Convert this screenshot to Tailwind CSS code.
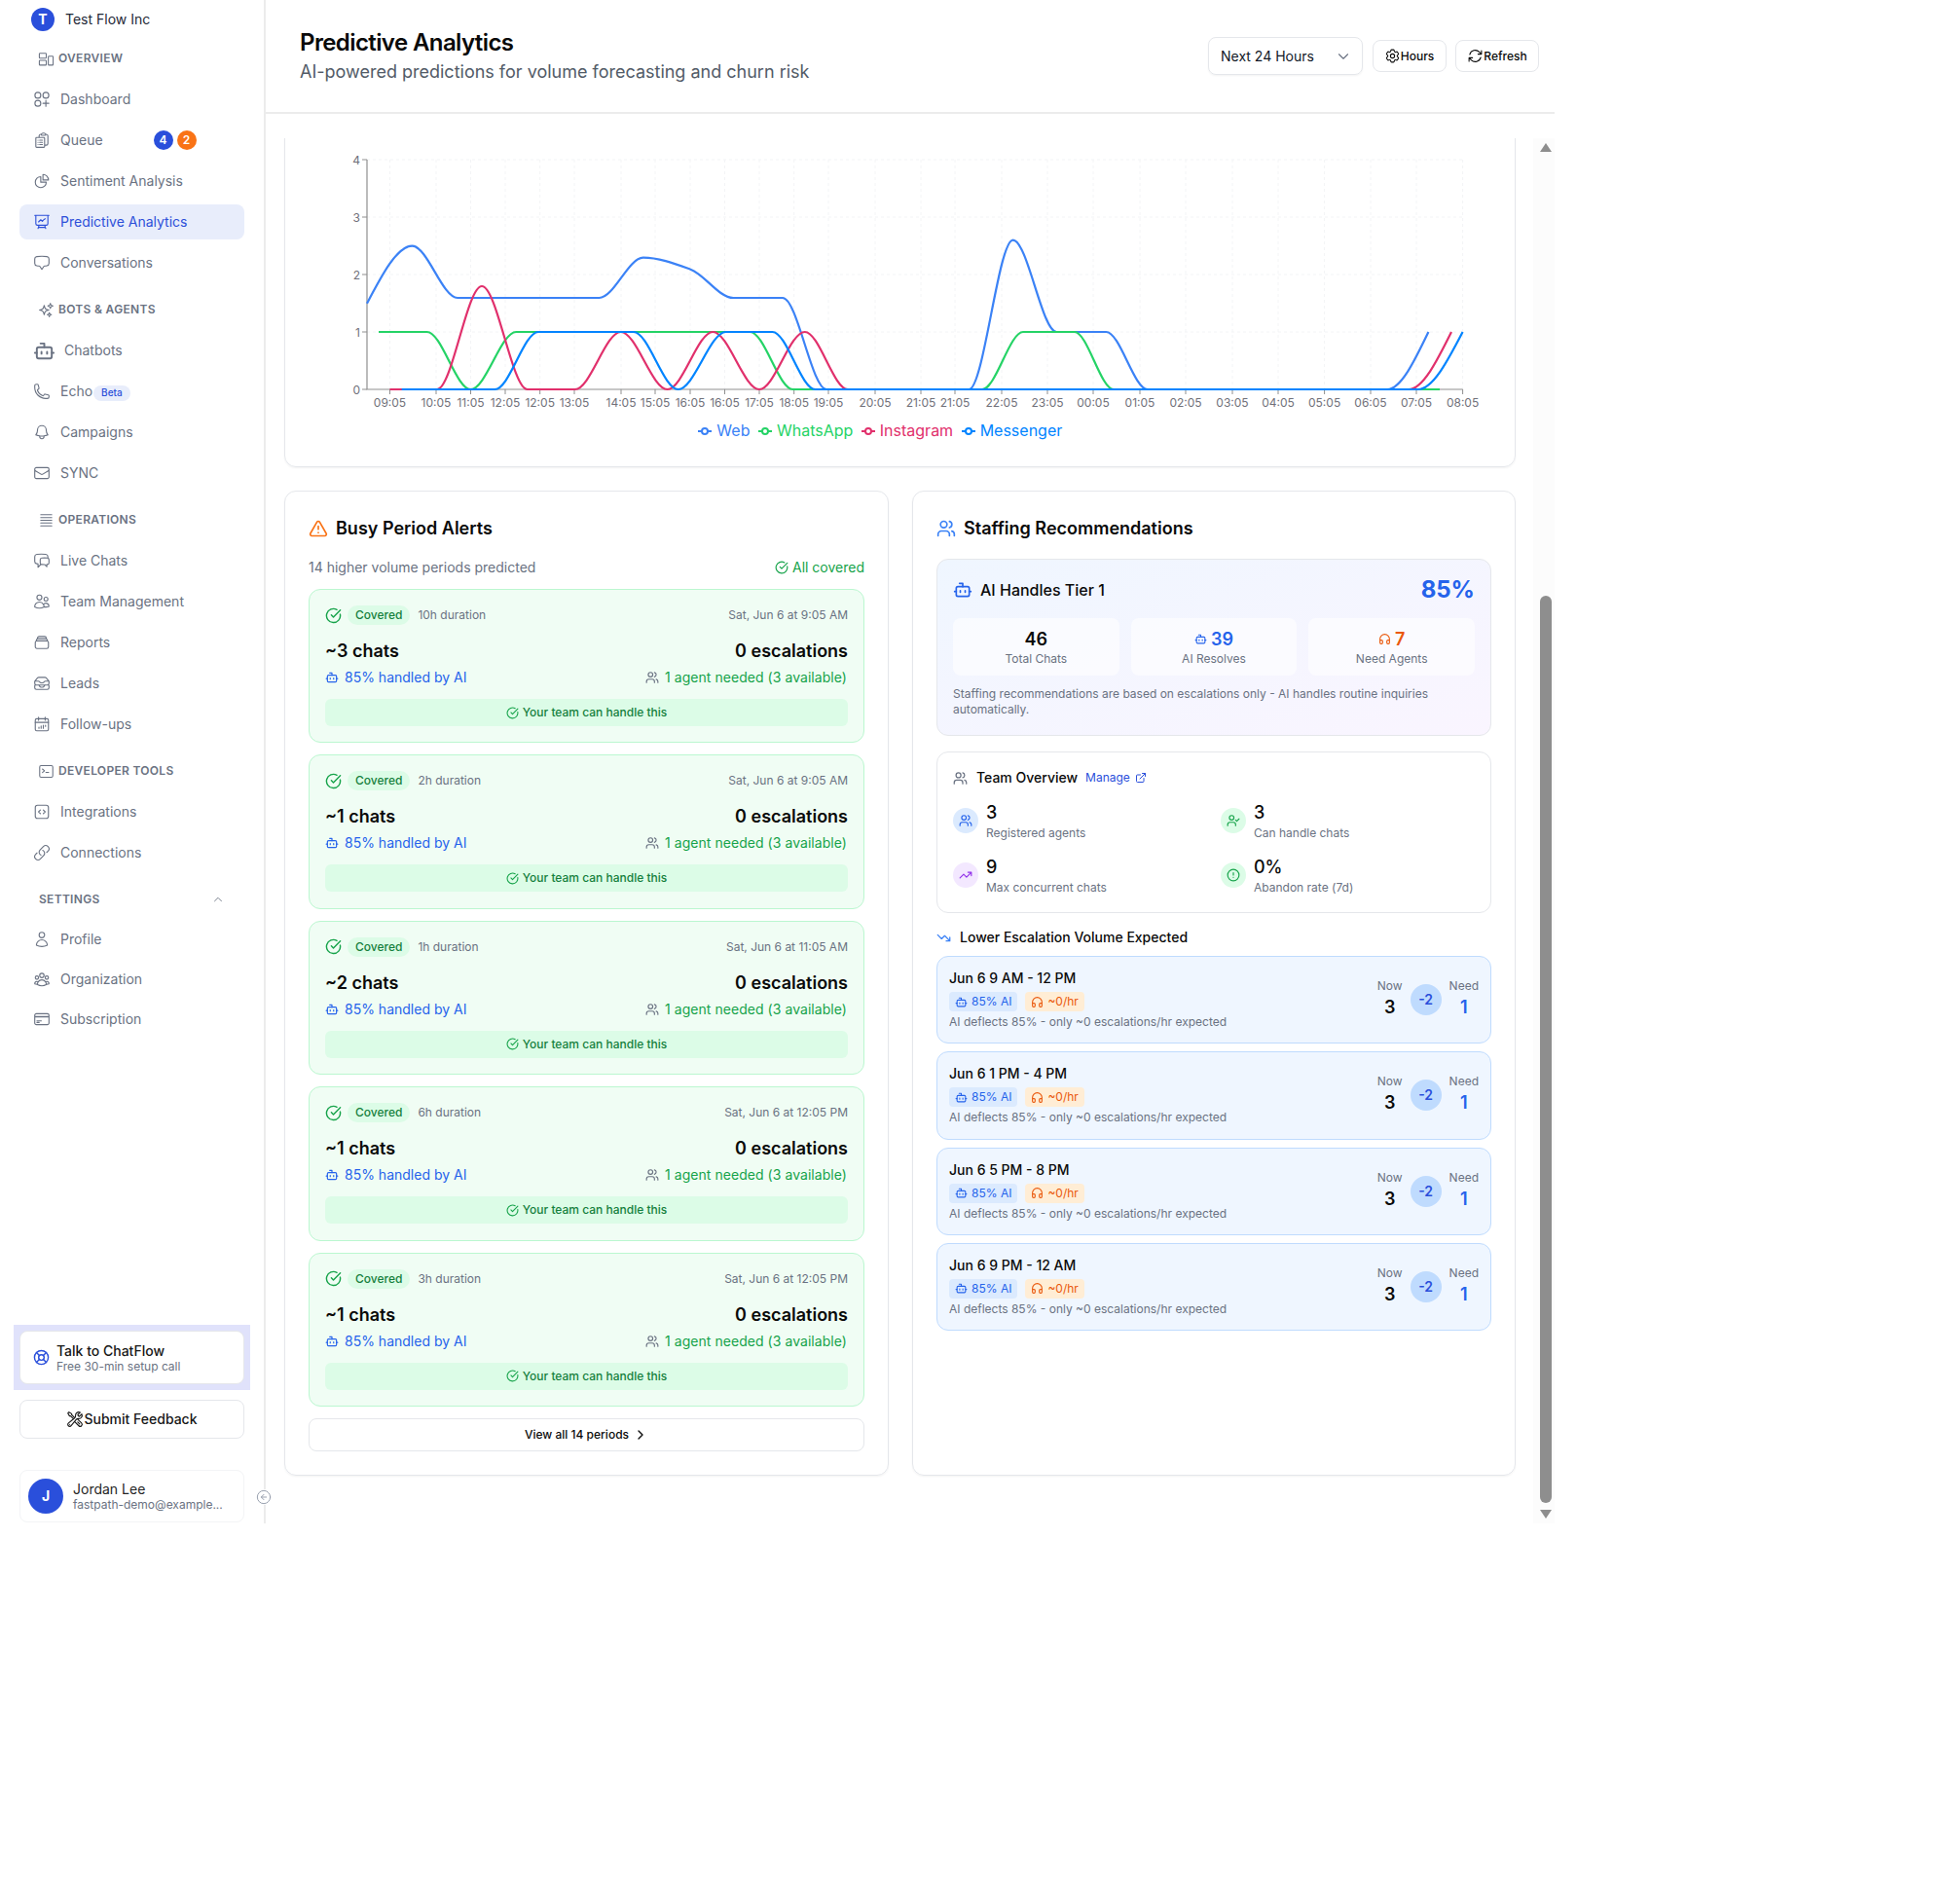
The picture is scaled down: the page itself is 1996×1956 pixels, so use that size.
<!DOCTYPE html>
<html>
  <head>
    <meta charset="UTF-8" />
    <title>Predictive Analytics</title>
    <script src="https://cdn.jsdelivr.net/npm/@tailwindcss/browser@4"></script>
  </head>
  <body class="bg-white font-['Inter',sans-serif] text-[#0a0a0a]">
    <!-- icon sprite -->
    <svg class="hidden">
      <symbol id="overview" viewBox="0 0 24 24"><rect x="2" y="4" width="10" height="7" rx="1"/><rect x="2" y="14" width="10" height="7" rx="1"/><rect x="15" y="8" width="7" height="13" rx="1"/></symbol>
      <symbol id="dash" viewBox="0 0 24 24"><circle cx="6.5" cy="6.5" r="4"/><circle cx="17.5" cy="6.5" r="4"/><circle cx="6.5" cy="17.5" r="4"/><path d="M17.5 13.5v8M13.5 17.5h8"/></symbol>
      <symbol id="queue" viewBox="0 0 24 24"><path d="M9 12h3.75M9 15h3.75M9 18h3.75m3 .75H18a2.25 2.25 0 0 0 2.25-2.25V6.108c0-1.135-.845-2.098-1.976-2.192a48.424 48.424 0 0 0-1.123-.08m-5.801 0c-.065.21-.1.433-.1.664 0 .414.336.75.75.75h4.5a.75.75 0 0 0 .75-.75 2.25 2.25 0 0 0-.1-.664m-5.8 0A2.251 2.251 0 0 1 13.5 2.25H15c1.012 0 1.867.668 2.15 1.586m-5.8 0c-.376.023-.75.05-1.124.08C9.095 4.01 8.25 4.973 8.25 6.108V8.25m0 0H4.875c-.621 0-1.125.504-1.125 1.125v11.25c0 .621.504 1.125 1.125 1.125h9.75c.621 0 1.125-.504 1.125-1.125V9.375c0-.621-.504-1.125-1.125-1.125H8.25ZM6.75 12h.008v.008H6.75V12Zm0 3h.008v.008H6.75V15Zm0 3h.008v.008H6.75V18Z"/></symbol>
      <symbol id="pie" viewBox="0 0 24 24"><path d="M10.5 6a7.5 7.5 0 1 0 7.5 7.5h-7.5V6Z"/><path d="M13.5 10.5H21A7.5 7.5 0 0 0 13.5 3v7.5Z"/></symbol>
      <symbol id="present" viewBox="0 0 24 24"><path d="M3.75 3v11.25A2.25 2.25 0 0 0 6 16.5h2.25M3.75 3h-1.5m1.5 0h16.5m0 0h1.5m-1.5 0v11.25A2.25 2.25 0 0 1 18 16.5h-2.25m-7.5 0h7.5m-7.5 0-1 3m8.5-3 1 3m0 0 .5 1.5m-.5-1.5h-9.5m0 0-.5 1.5m.75-9 3-3 2.148 2.148A12.061 12.061 0 0 1 16.5 7.605"/></symbol>
      <symbol id="bubble" viewBox="0 0 24 24"><path d="M2.25 12.76c0 1.6 1.123 2.994 2.707 3.227 1.068.157 2.148.279 3.238.364.466.037.893.281 1.153.671L12 21l2.652-3.978c.26-.39.687-.634 1.153-.67 1.09-.086 2.17-.208 3.238-.365 1.584-.233 2.707-1.626 2.707-3.228V6.741c0-1.602-1.123-2.995-2.707-3.228A48.394 48.394 0 0 0 12 3c-2.392 0-4.744.175-7.043.513C3.373 3.746 2.25 5.14 2.25 6.741v6.018Z"/></symbol>
      <symbol id="sparkles" viewBox="0 0 24 24"><path d="M9.813 15.904 9 18.75l-.813-2.846a4.5 4.5 0 0 0-3.09-3.09L2.25 12l2.846-.813a4.5 4.5 0 0 0 3.09-3.09L9 5.25l.813 2.846a4.5 4.5 0 0 0 3.09 3.09L15.75 12l-2.846.813a4.5 4.5 0 0 0-3.09 3.09ZM18.259 8.715 18 9.75l-.259-1.035a3.375 3.375 0 0 0-2.455-2.456L14.25 6l1.036-.259a3.375 3.375 0 0 0 2.455-2.456L18 2.25l.259 1.035a3.375 3.375 0 0 0 2.456 2.456L21.75 6l-1.035.259a3.375 3.375 0 0 0-2.456 2.456ZM16.894 20.567 16.5 21.75l-.394-1.183a2.25 2.25 0 0 0-1.423-1.423L13.5 18.75l1.183-.394a2.25 2.25 0 0 0 1.423-1.423l.394-1.183.394 1.183a2.25 2.25 0 0 0 1.423 1.423l1.183.394-1.183.394a2.25 2.25 0 0 0-1.423 1.423Z"/></symbol>
      <symbol id="bot" viewBox="0 0 24 24"><path d="M12 8V4H8"/><rect x="4" y="8" width="16" height="12" rx="2"/><path d="M2 14h2M20 14h2M15 13v2M9 13v2"/></symbol>
      <symbol id="phone" viewBox="0 0 24 24"><path d="M2.25 6.75c0 8.284 6.716 15 15 15h2.25a2.25 2.25 0 0 0 2.25-2.25v-1.372c0-.516-.351-.966-.852-1.091l-4.423-1.106c-.44-.11-.902.055-1.173.417l-.97 1.293c-.282.376-.769.542-1.21.38a12.035 12.035 0 0 1-7.143-7.143c-.162-.441.004-.928.38-1.21l1.293-.97c.363-.271.527-.734.417-1.173L6.963 3.102a1.125 1.125 0 0 0-1.091-.852H4.5A2.25 2.25 0 0 0 2.25 4.5v2.25Z"/></symbol>
      <symbol id="bell" viewBox="0 0 24 24"><path d="M14.857 17.082a23.848 23.848 0 0 0 5.454-1.31A8.967 8.967 0 0 1 18 9.75V9A6 6 0 0 0 6 9v.75a8.967 8.967 0 0 1-2.312 6.022c1.733.64 3.56 1.085 5.455 1.31m5.714 0a24.255 24.255 0 0 1-5.714 0m5.714 0a3 3 0 1 1-5.714 0"/></symbol>
      <symbol id="mail" viewBox="0 0 24 24"><path d="M21.75 6.75v10.5a2.25 2.25 0 0 1-2.25 2.25h-15a2.25 2.25 0 0 1-2.25-2.25V6.75m19.5 0A2.25 2.25 0 0 0 19.5 4.5h-15a2.25 2.25 0 0 0-2.25 2.25m19.5 0v.243a2.25 2.25 0 0 1-1.07 1.916l-7.5 4.615a2.25 2.25 0 0 1-2.36 0L3.32 8.91a2.25 2.25 0 0 1-1.07-1.916V6.75"/></symbol>
      <symbol id="lines" viewBox="0 0 24 24"><path d="M4 4h16M4 8h16M4 12h16M4 16h16M4 20h16"/></symbol>
      <symbol id="chats" viewBox="0 0 24 24"><path d="M20.25 8.511c.884.284 1.5 1.128 1.5 2.097v4.286c0 1.136-.847 2.1-1.98 2.193-.34.027-.68.052-1.02.072v3.091l-3-3c-1.354 0-2.694-.055-4.02-.163a2.115 2.115 0 0 1-.825-.242m9.345-8.334a2.126 2.126 0 0 0-.476-.095 48.64 48.64 0 0 0-8.048 0c-1.131.094-1.976 1.057-1.976 2.192v4.286c0 .837.46 1.58 1.155 1.951m9.345-8.334V6.637c0-1.621-1.152-3.026-2.76-3.235A48.455 48.455 0 0 0 11.25 3c-2.115 0-4.198.137-6.24.402-1.608.209-2.76 1.614-2.76 3.235v6.226c0 1.621 1.152 3.026 2.76 3.235.577.075 1.157.14 1.74.194V21l4.155-4.155"/></symbol>
      <symbol id="team" viewBox="0 0 24 24"><path d="M15 19.128a9.38 9.38 0 0 0 2.625.372 9.337 9.337 0 0 0 4.121-.952 4.125 4.125 0 0 0-7.533-2.493M15 19.128v-.003c0-1.113-.285-2.16-.786-3.07M15 19.128v.106A12.318 12.318 0 0 1 8.624 21c-2.331 0-4.512-.645-6.374-1.766l-.001-.109a6.375 6.375 0 0 1 11.964-3.07M12 6.375a3.375 3.375 0 1 1-6.75 0 3.375 3.375 0 0 1 6.75 0Zm8.25 2.25a2.625 2.625 0 1 1-5.25 0 2.625 2.625 0 0 1 5.25 0Z"/></symbol>
      <symbol id="stack" viewBox="0 0 24 24"><path d="M6 6.878V6a2.25 2.25 0 0 1 2.25-2.25h7.5A2.25 2.25 0 0 1 18 6v.878m-12 0c.235-.083.487-.128.75-.128h10.5c.263 0 .515.045.75.128m-12 0A2.25 2.25 0 0 0 4.5 9v.878m13.5-3A2.25 2.25 0 0 1 19.5 9v.878m0 0a2.246 2.246 0 0 0-.75-.128H5.25c-.263 0-.515.045-.75.128m15 0A2.25 2.25 0 0 1 21 12v6a2.25 2.25 0 0 1-2.25 2.25H5.25A2.25 2.25 0 0 1 3 18v-6c0-.98.626-1.813 1.5-2.122"/></symbol>
      <symbol id="inbox" viewBox="0 0 24 24"><path d="M7.875 14.25l1.214 1.942a2.25 2.25 0 0 0 1.908 1.058h2.006c.776 0 1.497-.4 1.908-1.058l1.214-1.942M2.41 9h4.636a2.25 2.25 0 0 1 1.872 1.002l.164.246a2.25 2.25 0 0 0 1.872 1.002h2.092a2.25 2.25 0 0 0 1.872-1.002l.164-.246A2.25 2.25 0 0 1 16.954 9h4.636M2.41 9a2.25 2.25 0 0 0-.16.832V12a2.25 2.25 0 0 0 2.25 2.25h15A2.25 2.25 0 0 0 21.75 12V9.832c0-.287-.055-.57-.16-.832M2.41 9a2.25 2.25 0 0 1 .382-.632l3.285-3.832a2.25 2.25 0 0 1 1.708-.786h8.43c.657 0 1.281.287 1.709.786l3.284 3.832c.163.19.291.404.382.632M4.5 20.25h15A2.25 2.25 0 0 0 21.75 18v-2.625c0-.621-.504-1.125-1.125-1.125H3.375c-.621 0-1.125.504-1.125 1.125V18a2.25 2.25 0 0 0 2.25 2.25Z"/></symbol>
      <symbol id="calendar" viewBox="0 0 24 24"><rect x="3" y="4.5" width="18" height="16.5" rx="2"/><path d="M3 9.5h18M7.5 2.5v4M16.5 2.5v4M8 17.5V16M11 17.5v-3M14 17.5v-4M17 15v-1.5"/></symbol>
      <symbol id="terminal" viewBox="0 0 24 24"><rect x="2.5" y="3.5" width="19" height="17" rx="2"/><path d="M6.5 8.5l3 2.5-3 2.5M11.5 13.5h4"/></symbol>
      <symbol id="code" viewBox="0 0 24 24"><rect x="3" y="3" width="18" height="18" rx="3"/><path d="M10 9.5 7.5 12l2.5 2.5M14 9.5l2.5 2.5-2.5 2.5"/></symbol>
      <symbol id="link" viewBox="0 0 24 24"><path d="M13.19 8.688a4.5 4.5 0 0 1 1.242 7.244l-4.5 4.5a4.5 4.5 0 0 1-6.364-6.364l1.757-1.757m13.35-.622 1.757-1.757a4.5 4.5 0 0 0-6.364-6.364l-4.5 4.5a4.5 4.5 0 0 0 1.242 7.244"/></symbol>
      <symbol id="user" viewBox="0 0 24 24"><path d="M15.75 6a3.75 3.75 0 1 1-7.5 0 3.75 3.75 0 0 1 7.5 0ZM4.501 20.118a7.5 7.5 0 0 1 14.998 0A17.933 17.933 0 0 1 12 21.75c-2.676 0-5.216-.584-7.499-1.632Z"/></symbol>
      <symbol id="group" viewBox="0 0 24 24"><path d="M18 18.72a9.094 9.094 0 0 0 3.741-.479 3 3 0 0 0-4.682-2.72m.94 3.198.001.031c0 .225-.012.447-.037.666A11.944 11.944 0 0 1 12 21c-2.17 0-4.207-.576-5.963-1.584A6.062 6.062 0 0 1 6 18.719m12 0a5.971 5.971 0 0 0-.941-3.197m0 0A5.995 5.995 0 0 0 12 12.75a5.995 5.995 0 0 0-5.058 2.772m0 0a3 3 0 0 0-4.681 2.72 8.986 8.986 0 0 0 3.74.477m.94-3.197a5.971 5.971 0 0 0-.94 3.197M15 6.75a3 3 0 1 1-6 0 3 3 0 0 1 6 0Zm6 3a2.25 2.25 0 1 1-4.5 0 2.25 2.25 0 0 1 4.5 0Zm-13.5 0a2.25 2.25 0 1 1-4.5 0 2.25 2.25 0 0 1 4.5 0Z"/></symbol>
      <symbol id="card" viewBox="0 0 24 24"><path d="M2.25 8.25h19.5M2.25 9h19.5m-16.5 5.25h6m-6 2.25h3m-3.75 3h15a2.25 2.25 0 0 0 2.25-2.25V6.75A2.25 2.25 0 0 0 19.5 4.5h-15a2.25 2.25 0 0 0-2.25 2.25v10.5A2.25 2.25 0 0 0 4.5 19.5Z"/></symbol>
      <symbol id="buoy" viewBox="0 0 24 24"><circle cx="12" cy="12" r="10"/><circle cx="12" cy="12" r="4"/><path d="m4.93 4.93 4.24 4.24M14.83 9.17l4.24-4.24M14.83 14.83l4.24 4.24M9.17 14.83l-4.24 4.24"/></symbol>
      <symbol id="tools" viewBox="0 0 24 24"><path d="M11.42 15.17 17.25 21A2.652 2.652 0 0 0 21 17.25l-5.877-5.877M11.42 15.17l2.496-3.03c.317-.384.74-.626 1.208-.766M11.42 15.17l-4.655 5.653a2.548 2.548 0 1 1-3.586-3.586l6.837-5.63m5.108-.233c.55-.164 1.163-.188 1.743-.14a4.5 4.5 0 0 0 4.486-6.336l-3.276 3.277a3.004 3.004 0 0 1-2.25-2.25l3.276-3.276a4.5 4.5 0 0 0-6.336 4.486c.091 1.076-.071 2.264-.904 2.95l-.102.085m-1.745 1.437L5.909 7.5H4.5L2.25 3.75l1.5-1.5L7.5 4.5v1.409l4.26 4.26m-1.745 1.437 1.745-1.437m6.615 8.206L15.75 15.75M4.867 19.125h.008v.008h-.008v-.008Z"/></symbol>
      <symbol id="gear" viewBox="0 0 24 24"><path d="M9.594 3.94c.09-.542.56-.94 1.11-.94h2.593c.55 0 1.02.398 1.11.94l.213 1.281c.063.374.313.686.645.87.074.04.147.083.22.127.325.196.72.257 1.075.124l1.217-.456a1.125 1.125 0 0 1 1.37.49l1.296 2.247a1.125 1.125 0 0 1-.26 1.431l-1.003.827c-.293.241-.438.613-.43.992a7.723 7.723 0 0 1 0 .255c-.008.378.137.75.43.991l1.004.827c.424.35.534.955.26 1.43l-1.298 2.247a1.125 1.125 0 0 1-1.369.491l-1.217-.456c-.355-.133-.75-.072-1.076.124a6.47 6.47 0 0 1-.22.128c-.331.183-.581.495-.644.869l-.213 1.281c-.09.543-.56.94-1.11.94h-2.594c-.55 0-1.019-.398-1.11-.94l-.213-1.281c-.062-.374-.312-.686-.644-.87a6.52 6.52 0 0 1-.22-.127c-.325-.196-.72-.257-1.076-.124l-1.217.456a1.125 1.125 0 0 1-1.369-.49l-1.297-2.247a1.125 1.125 0 0 1 .26-1.431l1.004-.827c.292-.24.437-.613.43-.991a6.932 6.932 0 0 1 0-.255c.007-.38-.138-.751-.43-.992l-1.004-.827a1.125 1.125 0 0 1-.26-1.43l1.297-2.247a1.125 1.125 0 0 1 1.37-.491l1.216.456c.356.133.751.072 1.076-.124.072-.044.146-.086.22-.128.332-.183.582-.495.644-.869l.214-1.28Z"/><path d="M15 12a3 3 0 1 1-6 0 3 3 0 0 1 6 0Z"/></symbol>
      <symbol id="refresh" viewBox="0 0 24 24"><path d="M16.023 9.348h4.992v-.001M2.985 19.644v-4.992m0 0h4.992m-4.993 0 3.181 3.183a8.25 8.25 0 0 0 13.803-3.7M4.031 9.865a8.25 8.25 0 0 1 13.803-3.7l3.181 3.182m0-4.991v4.99"/></symbol>
      <symbol id="warn" viewBox="0 0 24 24"><path d="m21.73 18-8-14a2 2 0 0 0-3.48 0l-8 14A2 2 0 0 0 4 21h16a2 2 0 0 0 1.73-3"/><path d="M12 9v4M12 17h.01"/></symbol>
      <symbol id="check" viewBox="0 0 24 24"><path d="M21.801 10A10 10 0 1 1 17 3.335"/><path d="m9 11 3 3L22 4"/></symbol>
      <symbol id="users" viewBox="0 0 24 24"><path d="M16 21v-2a4 4 0 0 0-4-4H6a4 4 0 0 0-4 4v2"/><circle cx="9" cy="7" r="4"/><path d="M22 21v-2a4 4 0 0 0-3-3.87M16 3.13a4 4 0 0 1 0 7.75"/></symbol>
      <symbol id="usercheck" viewBox="0 0 24 24"><path d="M16 21v-2a4 4 0 0 0-4-4H6a4 4 0 0 0-4 4v2"/><circle cx="9" cy="7" r="4"/><path d="m16 11 2 2 4-4"/></symbol>
      <symbol id="headset" viewBox="0 0 24 24"><path d="M3 14h3a2 2 0 0 1 2 2v3a2 2 0 0 1-2 2H5a2 2 0 0 1-2-2v-7a9 9 0 0 1 18 0v7a2 2 0 0 1-2 2h-1a2 2 0 0 1-2-2v-3a2 2 0 0 1 2-2h3"/></symbol>
      <symbol id="external" viewBox="0 0 24 24"><path d="M15 3h6v6M10 14 21 3M18 13v6a2 2 0 0 1-2 2H5a2 2 0 0 1-2-2V8a2 2 0 0 1 2-2h6"/></symbol>
      <symbol id="down" viewBox="0 0 24 24"><path d="M22 17 13.5 8.5l-5 5L2 7M16 17h6v-6"/></symbol>
      <symbol id="up" viewBox="0 0 24 24"><path d="M22 7l-8.5 8.5-5-5L2 17M16 7h6v6"/></symbol>
      <symbol id="alert" viewBox="0 0 24 24"><circle cx="12" cy="12" r="10"/><path d="M12 8v4M12 16h.01"/></symbol>
      <symbol id="chevdown" viewBox="0 0 24 24"><path d="m6 9 6 6 6-6"/></symbol>
      <symbol id="chevup" viewBox="0 0 24 24"><path d="m18 15-6-6-6 6"/></symbol>
      <symbol id="chevright" viewBox="0 0 24 24"><path d="m9 18 6-6-6-6"/></symbol>
      <symbol id="back" viewBox="0 0 24 24"><circle cx="12" cy="12" r="10"/><path d="M16 12H8M12 8l-4 4 4 4"/></symbol>
    </svg>

    <div class="flex w-[1597px] h-[1565px] relative">
      <aside class="w-[273px] shrink-0 h-full border-r-2 border-[#ececec] flex flex-col pl-5 pr-[20px]">
        <div class="h-[39px] flex items-center gap-[11px] pl-3 text-sm text-[#1f2937]">
          <span class="w-6 h-6 rounded-full bg-[#2a4fdb] text-white font-bold text-sm flex items-center justify-center">T</span>
          Test Flow Inc
        </div>
        <nav id="nav" class="mt-[-3px]"></nav>

        <div class="mt-auto">
          <div class="ml-[-6px] mr-[-6px] p-[6px] bg-[#e0e2fb]">
            <div class="h-[55px] bg-white rounded-lg border border-gray-200 flex items-center gap-[7px] pl-[13px]">
              <i data-icon="buoy" class="w-[17px] h-[17px] text-[#2a4fdb]"></i>
              <div>
                <div class="text-sm font-medium leading-[17px] text-[#171717]">Talk to ChatFlow</div>
                <div class="text-xs leading-[15px] text-gray-500">Free 30-min setup call</div>
              </div>
            </div>
          </div>
          <div class="mt-[10px] h-10 rounded-lg border border-gray-200 flex items-center justify-center text-sm font-medium text-[#171717]">
            <i data-icon="tools" class="w-[18px] h-[18px]"></i>Submit Feedback
          </div>
          <div class="mt-8 h-[54px] mb-[1px] rounded-lg border border-gray-100 flex items-center gap-[10px] pl-2">
            <span class="w-9 h-9 rounded-full bg-[#2a4fdb] text-white font-bold text-sm flex items-center justify-center">J</span>
            <div>
              <div class="text-sm leading-[17px] text-[#262626]">Jordan Lee</div>
              <div class="text-xs leading-[16px] text-gray-500">fastpath-demo@example...</div>
            </div>
          </div>
        </div>
      </aside>
      <span class="absolute left-[263px] top-[1530px] w-4 h-4 bg-white rounded-full">
        <i data-icon="back" class="w-4 h-4 text-gray-400"></i>
      </span>

      <main class="flex-1 min-w-0 h-full flex flex-col">
        <header class="h-[117px] shrink-0 border-b-2 border-[#ececec] flex items-center justify-between pl-[35px] pr-4">
          <div>
            <h1 class="text-2xl font-semibold leading-8 tracking-[-0.6px]">Predictive Analytics</h1>
            <p class="text-lg leading-7 text-[#525b67]">AI-powered predictions for volume forecasting and churn risk</p>
          </div>
          <div class="flex items-center gap-[9.5px]">
            <div class="w-[159px] h-[39px] rounded-lg border border-gray-200 shadow-xs flex items-center justify-between pl-3 pr-[10px] text-sm text-[#111827]">
              Next 24 Hours
              <i data-icon="chevdown" class="w-[18px] h-[18px] text-gray-500"></i>
            </div>
            <div class="h-[33px] w-[76px] rounded-lg border border-gray-200 flex items-center justify-center text-xs font-medium">
              <i data-icon="gear" class="w-[17px] h-[17px]"></i>Hours
            </div>
            <div class="h-[33px] w-[86px] rounded-lg border border-gray-200 flex items-center justify-center text-xs font-medium">
              <i data-icon="refresh" class="w-[17px] h-[17px]"></i>Refresh
            </div>
          </div>
        </header>

        <div class="flex flex-1 min-h-0 mt-[25px]">
          <div class="w-[1302px] shrink-0 overflow-hidden pl-[19px]">
            <!-- chart card, scrolled so its top is cut off -->
            <section class="w-[1265px] h-[358px] mt-[-20px] border border-gray-200 rounded-xl shadow-xs pl-[47px] pt-[19px]">
              <svg id="chart" width="1200" height="284" viewBox="340 142 1200 284" class="block"></svg>
              <div class="w-[1126px] ml-[1.3px] mt-[4px] flex justify-center gap-[8.5px] text-base leading-6" id="legend"></div>
            </section>

            <div class="mt-6 w-[1265px] grid grid-cols-[621px_620px] gap-6">
              <section class="border border-gray-200 rounded-xl shadow-xs p-6">
                <h2 class="h-7 flex items-center gap-[8px] text-lg font-semibold">
                  <i data-icon="warn" class="w-5 h-5 text-[#f97316]"></i>Busy Period Alerts
                </h2>
                <div class="mt-4 h-5 flex items-center justify-between text-sm">
                  <span class="text-gray-500">14 higher volume periods predicted</span>
                  <span class="flex items-center gap-1 text-[#16a34a]"><i data-icon="check" class="w-[14px] h-[14px]"></i>All covered</span>
                </div>
                <div id="alerts" class="mt-3 flex flex-col gap-3"></div>
                <div class="mt-3 h-[34px] rounded-lg border border-gray-200 flex items-center justify-center gap-1 text-xs font-medium">
                  View all 14 periods <i data-icon="chevright" class="w-4 h-4"></i>
                </div>
              </section>

              <section class="border border-gray-200 rounded-xl shadow-xs p-6">
                <h2 class="h-7 flex items-center gap-[8px] text-lg font-semibold">
                  <i data-icon="users" class="w-5 h-5 text-[#3b82f6]"></i>Staffing Recommendations
                </h2>

                <div class="mt-[17px] rounded-xl border border-gray-200 bg-gradient-to-br from-[#eff6ff] to-[#faf5ff] pt-4 px-4 pb-[18px]">
                  <div class="h-[30px] flex items-center justify-between">
                    <span class="flex items-center gap-2 text-base font-medium">
                      <i data-icon="bot" class="w-5 h-5 text-[#2563eb]"></i>AI Handles Tier 1
                    </span>
                    <span class="text-2xl font-bold text-[#2563eb]">85%</span>
                  </div>
                  <div class="mt-[14px] grid grid-cols-3 gap-3">
                    <div class="h-[59px] rounded-lg bg-white/60 flex flex-col items-center justify-center">
                      <div class="text-lg leading-6 font-semibold">46</div>
                      <div class="text-xs leading-4 text-gray-500">Total Chats</div>
                    </div>
                    <div class="h-[59px] rounded-lg bg-white/60 flex flex-col items-center justify-center">
                      <div class="text-lg leading-6 font-semibold text-[#2563eb] flex items-center gap-1"><i data-icon="bot" class="w-[13px] h-[13px]"></i>39</div>
                      <div class="text-xs leading-4 text-gray-500">AI Resolves</div>
                    </div>
                    <div class="h-[59px] rounded-lg bg-white/60 flex flex-col items-center justify-center">
                      <div class="text-lg leading-6 font-semibold text-[#ea580c] flex items-center gap-1"><i data-icon="headset" class="w-[13px] h-[13px]"></i>7</div>
                      <div class="text-xs leading-4 text-gray-500">Need Agents</div>
                    </div>
                  </div>
                  <p class="mt-[11px] text-xs leading-4 text-gray-500">Staffing recommendations are based on escalations only - AI handles routine inquiries automatically.</p>
                </div>

                <div class="mt-4 rounded-xl border border-gray-200 pt-4 px-4 pb-[17px]">
                  <div class="h-5 flex items-center text-sm font-medium">
                    <i data-icon="users" class="w-[15px] h-[15px] text-gray-500 mr-[9px]"></i>Team Overview
                    <span class="ml-2 flex items-center gap-[5px] text-xs font-normal text-[#2a4fdb]">Manage <i data-icon="external" class="w-3 h-3"></i></span>
                  </div>
                  <div class="mt-[14px] grid grid-cols-2 gap-x-[14px] gap-y-[15px]" id="teamStats"></div>
                </div>

                <div class="mt-[15px] h-5 flex items-center gap-[9px] text-sm font-medium">
                  <i data-icon="down" class="w-[15px] h-[15px] text-[#3b82f6]"></i>Lower Escalation Volume Expected
                </div>
                <div id="lows" class="mt-[9px] flex flex-col gap-2"></div>
              </section>
            </div>
          </div>

          <!-- native looking scrollbar -->
          <div class="w-[22px] shrink-0 bg-[#fcfcfc] pl-[7px] flex flex-col">
            <svg class="w-3 h-[9px] mt-[5px] shrink-0" viewBox="0 0 12 9"><path d="M6 0l6 9H0z" fill="#8e8e8e"/></svg>
            <div class="w-3 h-[932px] mt-[456px] shrink-0 bg-[#8e8e8e] rounded-full"></div>
            <svg class="w-3 h-[9px] mt-[7px] shrink-0" viewBox="0 0 12 9"><path d="M6 9l6-9H0z" fill="#8e8e8e"/></svg>
          </div>
        </div>
      </main>
    </div>

    <script>
      const nav = [
        { head: "Overview", icon: "overview" },
        { label: "Dashboard", icon: "dash" },
        { label: "Queue", icon: "queue", badges: true },
        { label: "Sentiment Analysis", icon: "pie" },
        { label: "Predictive Analytics", icon: "present", active: true },
        { label: "Conversations", icon: "bubble" },
        { head: "Bots & Agents", icon: "sparkles" },
        { label: "Chatbots", icon: "bot" },
        { label: "Echo", icon: "phone", beta: true },
        { label: "Campaigns", icon: "bell" },
        { label: "SYNC", icon: "mail" },
        { head: "Operations", icon: "lines" },
        { label: "Live Chats", icon: "chats" },
        { label: "Team Management", icon: "team" },
        { label: "Reports", icon: "stack" },
        { label: "Leads", icon: "inbox" },
        { label: "Follow-ups", icon: "calendar" },
        { head: "Developer Tools", icon: "terminal" },
        { label: "Integrations", icon: "code" },
        { label: "Connections", icon: "link" },
        { head: "Settings", chevron: true },
        { label: "Profile", icon: "user", tight: true },
        { label: "Organization", icon: "group", tight: true },
        { label: "Subscription", icon: "card", tight: true },
      ];

      document.getElementById("nav").innerHTML = nav.map((n, i) => {
        if (n.head) {
          return `<div class="h-6 ${i === 0 ? "mt-3" : "mt-[18px]"} ${n.chevron ? "mb-[11px] pl-5" : "mb-3 pl-[19px]"} flex items-center gap-1 text-xs font-semibold tracking-[0.3px] uppercase text-gray-500">
            ${n.icon ? `<i data-icon="${n.icon}" class="w-[17px] h-[17px]"></i>` : ""}${n.head}
            ${n.chevron ? `<i data-icon="chevup" class="w-[14px] h-[14px] ml-auto mr-[20px]"></i>` : ""}
          </div>`;
        }
        const tone = n.active ? "bg-[#e8edfb] text-[#2d50d9]" : "text-gray-500";
        const wide = n.label === "Chatbots";
        return `<div class="h-9 ${n.tight ? "mb-[5px]" : "mb-1.5"} rounded-lg flex items-center pl-[14px] text-sm ${tone}">
          <i data-icon="${n.icon}" class="${wide ? "w-[23px] h-[23px] mr-[9px]" : "w-[18px] h-[18px] mr-[10px]"}"></i>${n.label}
          ${n.badges ? `<span class="ml-[52px] w-5 h-5 rounded-full bg-[#2a4fdb] text-white text-xs font-semibold flex items-center justify-center">4</span><span class="ml-1 w-5 h-5 rounded-full bg-[#f97316] text-white text-xs font-semibold flex items-center justify-center">2</span>` : ""}
          ${n.beta ? `<span class="ml-[1px] mt-[3px] h-4 px-2 rounded-full bg-[#e8edfb] text-[#2d50d9] text-[10px] font-medium flex items-center">Beta</span>` : ""}
        </div>`;
      }).join("");

      const alerts = [
        ["10h", "~3", "Sat, Jun 6 at 9:05 AM"],
        ["2h", "~1", "Sat, Jun 6 at 9:05 AM"],
        ["1h", "~2", "Sat, Jun 6 at 11:05 AM"],
        ["6h", "~1", "Sat, Jun 6 at 12:05 PM"],
        ["3h", "~1", "Sat, Jun 6 at 12:05 PM"],
      ];
      document.getElementById("alerts").innerHTML = alerts.map(([dur, chats, when]) => `
        <div class="h-[158.4px] rounded-xl border border-[#bbf7d0] bg-[#f0fdf4] p-4">
          <div class="h-5 flex items-center text-xs">
            <i data-icon="check" class="w-[17px] h-[17px] text-[#16a34a] mr-[6px]"></i>
            <span class="h-5 px-2 rounded-full bg-[#dcfce7] text-[#15803d] font-medium flex items-center">Covered</span>
            <span class="ml-2 text-gray-500">${dur} duration</span>
            <span class="ml-auto text-gray-500">${when}</span>
          </div>
          <div class="mt-[13px] h-7 flex items-center justify-between text-lg font-semibold">
            <span>${chats} chats</span><span>0 escalations</span>
          </div>
          <div class="mt-[3px] h-5 flex items-center justify-between text-sm">
            <span class="flex items-center gap-[6px] text-[#2563eb]"><i data-icon="bot" class="w-[14px] h-[14px]"></i>85% handled by AI</span>
            <span class="mr-[1px] flex items-center gap-[6px] tracking-[0.05px] text-[#16a34a]"><i data-icon="users" class="w-[14px] h-[14px] text-gray-500"></i>1 agent needed (3 available)</span>
          </div>
          <div class="mt-3 h-7 rounded-md bg-[#dcfce7] flex items-center justify-center gap-1 text-xs font-medium text-[#15803d]">
            <i data-icon="check" class="w-[13px] h-[13px] text-[#16a34a]"></i>Your team can handle this
          </div>
        </div>`).join("");

      const team = [
        ["users", "bg-[#dbeafe] text-[#2563eb]", "3", "Registered agents"],
        ["usercheck", "bg-[#dcfce7] text-[#16a34a]", "3", "Can handle chats"],
        ["up", "bg-[#f3e8ff] text-[#9333ea]", "9", "Max concurrent chats"],
        ["alert", "bg-[#dcfce7] text-[#16a34a]", "0%", "Abandon rate (7d)"],
      ];
      document.getElementById("teamStats").innerHTML = team.map(([icon, tone, value, label]) => `
        <div class="h-[41px] flex items-center gap-2">
          <span class="w-[26px] h-[26px] mt-[-1px] rounded-full flex items-center justify-center ${tone}"><i data-icon="${icon}" class="w-[14px] h-[14px]"></i></span>
          <div>
            <div class="text-lg leading-6 font-medium">${value}</div>
            <div class="text-xs leading-4 text-gray-500 mt-[1px]">${label}</div>
          </div>
        </div>`).join("");

      const lows = ["Jun 6 9 AM - 12 PM", "Jun 6 1 PM - 4 PM", "Jun 6 5 PM - 8 PM", "Jun 6 9 PM - 12 AM"];
      document.getElementById("lows").innerHTML = lows.map((when) => `
        <div class="h-[90.3px] rounded-xl border border-[#bfdbfe] bg-[#eff6ff] px-3 pt-3 flex justify-between">
          <div>
            <div class="h-5 flex items-center text-sm font-medium">${when}</div>
            <div class="mt-1 flex gap-2 text-xs">
              <span class="h-5 px-[6px] rounded bg-[#dbeafe] text-[#2563eb] flex items-center gap-1"><i data-icon="bot" class="w-[13px] h-[13px]"></i>85% AI</span>
              <span class="h-5 px-[6px] rounded bg-[#ffedd5] text-[#ea580c] flex items-center gap-1"><i data-icon="headset" class="w-[13px] h-[13px]"></i>~0/hr</span>
            </div>
            <div class="mt-[3px] text-xs leading-4 text-gray-500">AI deflects 85% - only ~0 escalations/hr expected</div>
          </div>
          <div class="h-[64px] flex items-center gap-2 text-center">
            <div><div class="text-xs leading-4 text-gray-500">Now</div><div class="text-lg leading-7 font-semibold">3</div></div>
            <span class="w-8 h-8 rounded-full bg-[#bfdbfe] text-[#2a4fdb] text-sm font-semibold flex items-center justify-center">-2</span>
            <div><div class="text-xs leading-4 text-gray-500">Need</div><div class="text-lg leading-7 font-semibold text-[#2563eb]">1</div></div>
          </div>
        </div>`).join("");

      // chart, drawn in page pixels so it lines up with the axis positions
      const ticks = [
        [400.5, "09:05"], [448, "10:05"], [483.5, "11:05"], [519, "12:05"], [554.7, "12:05"], [590, "13:05"], [638, "14:05"],
        [673, "15:05"], [709, "16:05"], [744.5, "16:05"], [780, "17:05"], [815.7, "18:05"], [851, "19:05"], [899, "20:05"],
        [946, "21:05"], [981, "21:05"], [1029, "22:05"], [1076, "23:05"], [1123, "00:05"], [1171, "01:05"], [1218, "02:05"],
        [1266, "03:05"], [1313, "04:05"], [1360.6, "05:05"], [1408, "06:05"], [1455, "07:05"], [1502.6, "08:05"],
      ];
      const Y0 = 400, ONE = 59;
      const series = [
        { color: "#3b82f6", name: "Web", pts: [[377, 311.7], [423.4, 252.7], [470, 306], [615.5, 306], [660.7, 264.7], [709.3, 276.7], [753.3, 306], [804, 306], [849, 400], [995.5, 400], [1040.6, 246.7], [1085.4, 341], [1136.3, 341], [1179, 400], [1425, 400], [1467.4, 341]] },
        { color: "#25d366", name: "WhatsApp", pts: [[389, 341], [438.7, 341], [483.5, 400], [530.2, 341], [770.5, 341], [814.6, 400], [1009, 400], [1051, 341], [1103.8, 341], [1144, 400], [1479, 400]] },
        { color: "#e1306c", name: "Instagram", pts: [[400.5, 400], [449, 400], [495, 294], [541.7, 400], [590.7, 400], [637.7, 341], [685.6, 400], [732.3, 341], [780, 400], [826.8, 341], [871, 400], [1447, 400], [1491, 341]] },
        { color: "#0084ff", name: "Messenger", pts: [[412.7, 400], [508.4, 400], [553, 341], [650.8, 341], [696.7, 400], [745.7, 341], [793.5, 341], [837.5, 400], [1456.6, 400], [1502.6, 341]] },
      ];

      function monotone(pts) {
        const s = pts.slice(1).map((p, i) => (p[1] - pts[i][1]) / (p[0] - pts[i][0]));
        const m = pts.map((_, i) => {
          if (i === 0 || i === pts.length - 1) return 0;
          return s[i - 1] * s[i] <= 0 ? 0 : (2 * s[i - 1] * s[i]) / (s[i - 1] + s[i]);
        });
        m[0] = (3 * s[0] - m[1]) / 2;
        m[pts.length - 1] = (3 * s[s.length - 1] - m[pts.length - 2]) / 2;
        let d = `M${pts[0][0]} ${pts[0][1]}`;
        for (let i = 1; i < pts.length; i++) {
          const dx = (pts[i][0] - pts[i - 1][0]) / 3;
          d += `C${pts[i - 1][0] + dx} ${pts[i - 1][1] + m[i - 1] * dx} ${pts[i][0] - dx} ${pts[i][1] - m[i] * dx} ${pts[i][0]} ${pts[i][1]}`;
        }
        return d;
      }

      let svg = "";
      [1, 2, 3, 4].forEach((v) => {
        svg += `<line x1="377" x2="1502.6" y1="${Y0 - v * ONE}" y2="${Y0 - v * ONE}" stroke="#f3f4f6" stroke-dasharray="3 3"/>`;
      });
      ticks.forEach(([x]) => {
        svg += `<line x1="${x}" x2="${x}" y1="164" y2="400" stroke="#f3f4f6" stroke-dasharray="3 3"/>`;
      });
      svg += `<path d="M377 164V400H1502.6" fill="none" stroke="#8f8f8f" stroke-width="1.2"/>`;
      [0, 1, 2, 3, 4].forEach((v) => {
        const y = Y0 - v * ONE;
        svg += `<line x1="372" x2="377" y1="${y}" y2="${y}" stroke="#8f8f8f"/><text x="370" y="${y + 4.5}" text-anchor="end" font-size="12" fill="#71717a">${v}</text>`;
      });
      ticks.forEach(([x, t]) => {
        svg += `<line x1="${x}" x2="${x}" y1="400" y2="405" stroke="#8f8f8f"/><text x="${x}" y="417.5" text-anchor="middle" font-size="12" fill="#71717a">${t}</text>`;
      });
      series.forEach((s) => {
        svg += `<path d="${monotone(s.pts)}" fill="none" stroke="${s.color}" stroke-width="2.2"/>`;
      });
      document.getElementById("chart").innerHTML = svg;

      document.getElementById("legend").innerHTML = series.map((s) => `
        <span class="flex items-center gap-[5px]" style="color:${s.color}">
          <svg width="14" height="14" viewBox="0 0 14 14" fill="none" class="mt-[2px]"><path d="M0 7h14" stroke="currentColor" stroke-width="2"/><circle cx="7" cy="7" r="3" fill="#fff" stroke="currentColor" stroke-width="2"/></svg>${s.name}
        </span>`).join("");

      // swap the placeholders for inline svg icons, lucide ones get the heavier stroke
      const heavy = ["warn", "check", "users", "usercheck", "bot", "headset", "external", "down", "up", "alert", "buoy", "chevright"];
      document.querySelectorAll("[data-icon]").forEach((el) => {
        const name = el.dataset.icon;
        el.outerHTML = `<svg class="shrink-0 ${el.className}" fill="none" stroke="currentColor" stroke-width="${heavy.includes(name) ? 2 : 1.5}" stroke-linecap="round" stroke-linejoin="round"><use href="#${name}"/></svg>`;
      });
    </script>
  </body>
</html>
